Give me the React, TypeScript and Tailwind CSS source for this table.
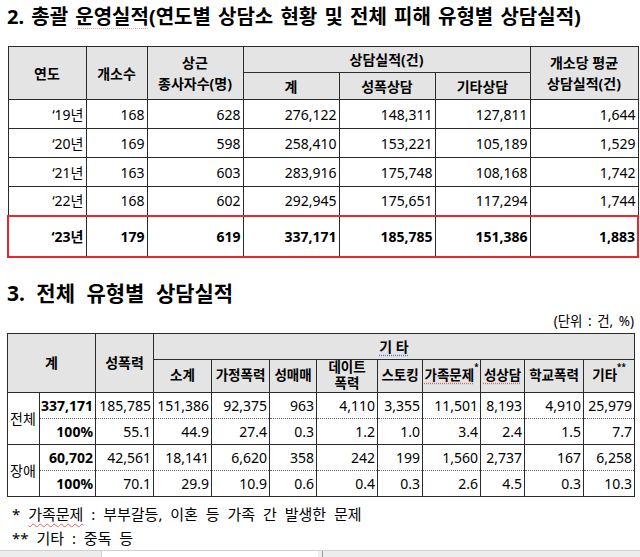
import React from 'react';

const FONT = '"Noto Sans", "Noto Sans CJK KR", sans-serif';

type Row1 = { year: string; centers: string; staff: string; total: string; sexual: string; other: string; avg: string };

const rows1: Row1[] = [
  { year: '‘19년', centers: '168', staff: '628', total: '276,122', sexual: '148,311', other: '127,811', avg: '1,644' },
  { year: '‘20년', centers: '169', staff: '598', total: '258,410', sexual: '153,221', other: '105,189', avg: '1,529' },
  { year: '‘21년', centers: '163', staff: '603', total: '283,916', sexual: '175,748', other: '108,168', avg: '1,742' },
  { year: '‘22년', centers: '168', staff: '602', total: '292,945', sexual: '175,651', other: '117,294', avg: '1,744' },
];

const last1: Row1 = { year: '‘23년', centers: '179', staff: '619', total: '337,171', sexual: '185,785', other: '151,386', avg: '1,883' };

const groups = [
  {
    label: '전체',
    count: ['337,171', '185,785', '151,386', '92,375', '963', '4,110', '3,355', '11,501', '8,193', '4,910', '25,979'],
    pct: ['100%', '55.1', '44.9', '27.4', '0.3', '1.2', '1.0', '3.4', '2.4', '1.5', '7.7'],
  },
  {
    label: '장애',
    count: ['60,702', '42,561', '18,141', '6,620', '358', '242', '199', '1,560', '2,737', '167', '6,258'],
    pct: ['100%', '70.1', '29.9', '10.9', '0.6', '0.4', '0.3', '2.6', '4.5', '0.3', '10.3'],
  },
];

const th = 'border border-[#2b2b2b] bg-[#e4e4e4] font-bold text-center align-middle p-0 leading-[21px]';
const td = 'border border-[#2b2b2b] text-right align-middle p-0 pr-[2px]';

function Table1() {
  const cols = [78, 61, 96, 96, 96, 95, 108];
  return (
    <table className="table-fixed border-collapse w-[630px] ml-[7px] text-[14px] text-black">
      <colgroup>
        {cols.map((w, i) => (
          <col key={i} style={{ width: w }} />
        ))}
      </colgroup>
      <thead>
        <tr className="h-[26px]">
          <th rowSpan={2} className={th}>연도</th>
          <th rowSpan={2} className={th}>개소수</th>
          <th rowSpan={2} className={th}>
            상근
            <br />
            종사자수(명)
          </th>
          <th colSpan={3} className={th}>상담실적(건)</th>
          <th rowSpan={2} className={th}>
            개소당 평균
            <br />
            상담실적(건)
          </th>
        </tr>
        <tr className="h-[27px]">
          <th className={th}>계</th>
          <th className={th}>성폭상담</th>
          <th className={th}>기타상담</th>
        </tr>
      </thead>
      <tbody>
        {rows1.map((r) => (
          <tr key={r.year} className="h-[29px]">
            <td className={`${td} text-center pr-0`}>{r.year}</td>
            <td className={td}>{r.centers}</td>
            <td className={td}>{r.staff}</td>
            <td className={td}>{r.total}</td>
            <td className={td}>{r.sexual}</td>
            <td className={td}>{r.other}</td>
            <td className={td}>{r.avg}</td>
          </tr>
        ))}
        <tr className="h-[41px] font-bold">
          <td className={`${td} text-center pr-0 border-l-2 border-t-2 border-b-2 border-l-[#e8262b] border-t-[#e8262b] border-b-[#e8262b]`}>{last1.year}</td>
          {[last1.centers, last1.staff, last1.total, last1.sexual, last1.other].map((v, i) => (
            <td key={i} className={`${td} border-t-2 border-b-2 border-t-[#e8262b] border-b-[#e8262b]`}>{v}</td>
          ))}
          <td className={`${td} border-r-2 border-t-2 border-b-2 border-r-[#e8262b] border-t-[#e8262b] border-b-[#e8262b]`}>{last1.avg}</td>
        </tr>
      </tbody>
    </table>
  );
}

function Table2() {
  const cols = [32, 56, 58, 58, 58, 47, 61, 45, 58, 44, 59, 51];
  const sub = 'border border-[#2b2b2b] bg-[#e4e4e4] font-bold text-center align-middle p-0 leading-[15px] text-[13.5px]';
  return (
    <table className="table-fixed border-collapse w-[627px] ml-[7px] text-[14px] text-black">
      <colgroup>
        {cols.map((w, i) => (
          <col key={i} style={{ width: w }} />
        ))}
      </colgroup>
      <thead>
        <tr className="h-[26px]">
          <th rowSpan={2} colSpan={2} className={th}>계</th>
          <th rowSpan={2} className={th}>성폭력</th>
          <th colSpan={9} className={th}>
            <span className="underline decoration-dotted decoration-[#5b7bd5] underline-offset-[3px]">기 타</span>
          </th>
        </tr>
        <tr className="h-[33px]">
          <th className={sub}>소계</th>
          <th className={sub}>가정폭력</th>
          <th className={sub}>성매매</th>
          <th className={sub}>
            <div className="flex flex-col items-center gap-[1px]">
              <span>데이트</span>
              <span>폭력</span>
            </div>
          </th>
          <th className={sub}>스토킹</th>
          <th className={sub}>
            <span className="underline decoration-dotted decoration-[#e06060] underline-offset-[3px]">가족문제</span>
            <sup className="text-[8px] align-[6px]">*</sup>
          </th>
          <th className={sub}>
            <span className="underline decoration-dotted decoration-[#e06060] underline-offset-[3px]">성상담</span>
          </th>
          <th className={sub}>학교폭력</th>
          <th className={sub}>
            기타<sup className="text-[8px] align-[6px]">**</sup>
          </th>
        </tr>
      </thead>
      <tbody>
        {groups.map((g) => (
          <React.Fragment key={g.label}>
            <tr className="h-[26px]">
              <td rowSpan={2} className="border border-[#2b2b2b] align-middle p-0 pl-[2px] text-left">{g.label}</td>
              {g.count.map((v, i) => (
                <td
                  key={i}
                  className={`${td} [border-bottom-style:dotted] border-b-[#666] ${i === 0 ? 'font-bold text-center pr-0' : ''}`}
                >
                  {v}
                </td>
              ))}
            </tr>
            <tr className="h-[26px]">
              {g.pct.map((v, i) => (
                <td
                  key={i}
                  className={`${td} [border-top-style:dotted] border-t-[#666] ${i === 0 ? 'font-bold text-center pr-0' : ''}`}
                >
                  {v}
                </td>
              ))}
            </tr>
          </React.Fragment>
        ))}
      </tbody>
    </table>
  );
}

export default function App() {
  return (
    <div className="relative w-[640px] h-[557px] overflow-hidden bg-white text-black" style={{ fontFamily: FONT }}>
      <div className="pl-[7px] pt-[4px] h-[46px] text-[20px] font-bold leading-[26px] [word-spacing:2px]">
        2. 총괄{' '}
        <span className="underline decoration-dotted decoration-[#f0a0a0] underline-offset-[4px] decoration-1">운영실적</span>
        (연도별 상담소 현황 및 전체 피해 유형별 상담실적)
      </div>
      <Table1 />
      <div className="pl-[7px] pt-[22px] h-[55px] text-[21px] font-bold leading-[26px] [word-spacing:6px]">3. 전체 유형별 상담실적</div>
      <div className="h-[20px] pr-[6px] text-right text-[13.5px] leading-[16px] [word-spacing:2px]">(단위 : 건, %)</div>
      <Table2 />
      <div className="pl-[12px] pt-[5px] text-[15px] leading-[24px] [word-spacing:4px]">
        <div>
          *{' '}
          <span className="underline decoration-wavy decoration-[#e06060] underline-offset-[3px] decoration-1">가족문제</span>{' '}
          : 부부갈등, 이혼 등 가족 간 발생한 문제
        </div>
        <div>** 기타 : 중독 등</div>
      </div>
      <div className="absolute left-0 right-0 bottom-0 h-[7px] bg-[#ededed] border-t border-[#d0d0d0] flex">
        <div className="ml-[101px] w-[217px] bg-white border-l border-[#d0d0d0]" />
        <div className="ml-[4px] w-px bg-[#999]" />
      </div>
    </div>
  );
}
